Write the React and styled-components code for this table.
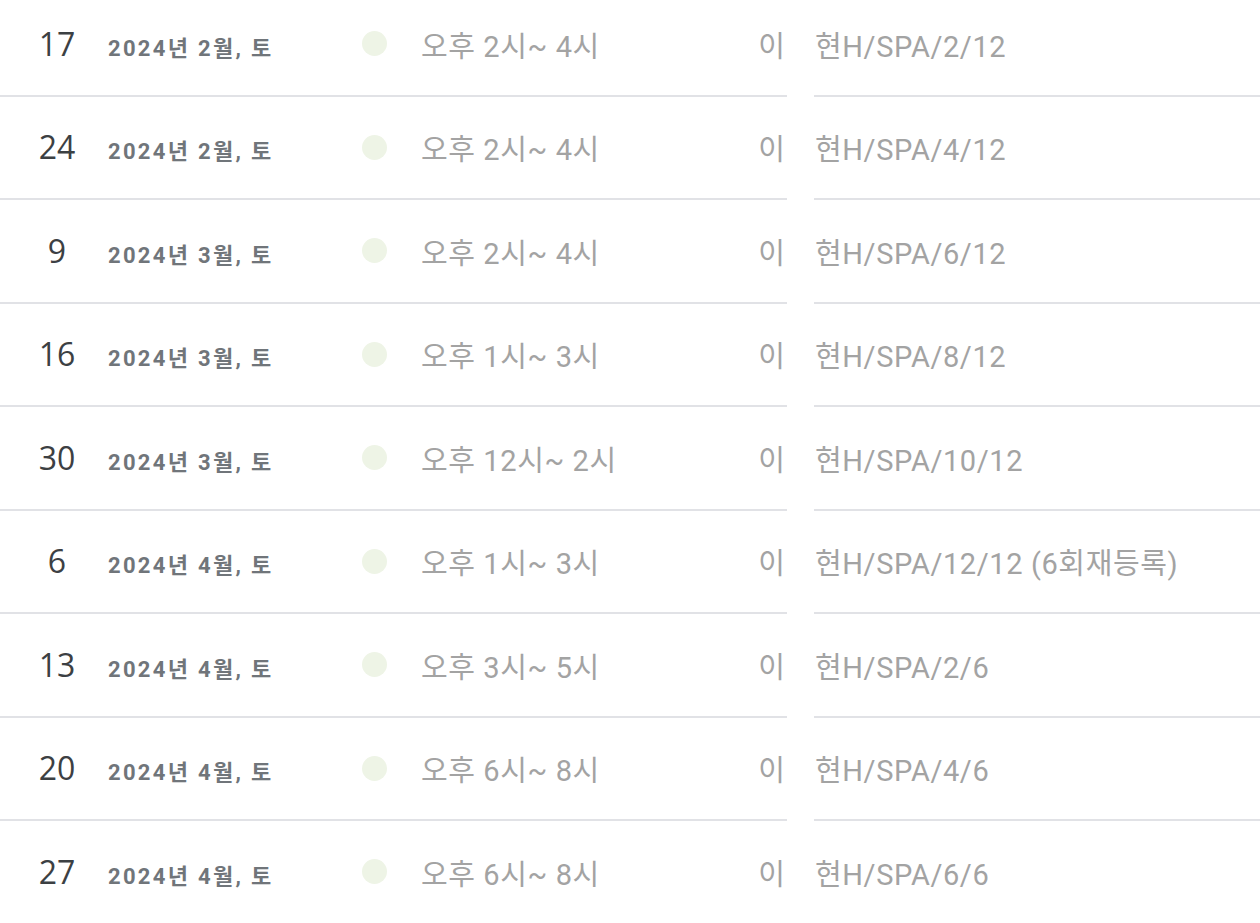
import React from "react";
import styled, { createGlobalStyle } from "styled-components";

const Global = createGlobalStyle`
  html, body { margin: 0; padding: 0; background: #ffffff; overflow: hidden; }
  body { font-family: Roboto, "Noto Sans CJK KR", sans-serif; }
`;

const List = styled.div`
  margin-top: -7px;
  display: flex;
  flex-direction: column;
`;

const Row = styled.div`
  display: flex;
  height: 103.5px;
`;

const Main = styled.div`
  flex: 0 0 787px;
  display: flex;
  align-items: center;
  box-sizing: border-box;
  border-bottom: 2px solid ${(p) => (p.$last ? "transparent" : "#e1e2e6")};
`;

const Side = styled.div`
  flex: 1;
  margin-left: 27px;
  display: flex;
  align-items: center;
  box-sizing: border-box;
  border-bottom: 2px solid ${(p) => (p.$last ? "transparent" : "#e1e2e6")};
`;

const DayNum = styled.div`
  width: 60px;
  margin-left: 27px;
  text-align: center;
  font-family: "Open Sans", Roboto, sans-serif;
  font-size: 32px;
  color: #3c4043;
  line-height: 1;
`;

const DateLabel = styled.div`
  width: 254px;
  margin-left: 21px;
  margin-top: 4px;
  font-family: Roboto, "Noto Sans CJK KR", sans-serif;
  font-weight: 700;
  font-size: 22px;
  letter-spacing: 2.3px;
  color: #70757a;
  white-space: nowrap;
`;

const Dot = styled.span`
  width: 25px;
  height: 25px;
  border-radius: 50%;
  background: #eef4e6;
  flex-shrink: 0;
`;

const Light = styled.div`
  font-family: Roboto, "Noto Sans CJK KR", sans-serif;
  font-size: 29px;
  letter-spacing: 0.6px;
  color: #a3a3a3;
  white-space: nowrap;
`;

const Time = styled(Light)`
  margin-left: 34px;
`;

const Who = styled(Light)`
  margin-left: auto;
  padding-right: 2px;
  letter-spacing: 0;
`;

const Title = styled(Light)`
  margin-left: 1px;
`;

const rows = [
  { d: "17", m: "2024년 2월, 토", t: "오후 2시~ 4시", s: "현H/SPA/2/12" },
  { d: "24", m: "2024년 2월, 토", t: "오후 2시~ 4시", s: "현H/SPA/4/12" },
  { d: "9", m: "2024년 3월, 토", t: "오후 2시~ 4시", s: "현H/SPA/6/12" },
  { d: "16", m: "2024년 3월, 토", t: "오후 1시~ 3시", s: "현H/SPA/8/12" },
  { d: "30", m: "2024년 3월, 토", t: "오후 12시~ 2시", s: "현H/SPA/10/12" },
  { d: "6", m: "2024년 4월, 토", t: "오후 1시~ 3시", s: "현H/SPA/12/12 (6회재등록)" },
  { d: "13", m: "2024년 4월, 토", t: "오후 3시~ 5시", s: "현H/SPA/2/6" },
  { d: "20", m: "2024년 4월, 토", t: "오후 6시~ 8시", s: "현H/SPA/4/6" },
  { d: "27", m: "2024년 4월, 토", t: "오후 6시~ 8시", s: "현H/SPA/6/6" },
];

export default function App() {
  return (
    <>
      <Global />
      <List>
        {rows.map((r, i) => {
          const last = i === rows.length - 1;
          return (
            <Row key={i}>
              <Main $last={last}>
                <DayNum>{r.d}</DayNum>
                <DateLabel>{r.m}</DateLabel>
                <Dot />
                <Time>{r.t}</Time>
                <Who>이</Who>
              </Main>
              <Side $last={last}>
                <Title>{r.s}</Title>
              </Side>
            </Row>
          );
        })}
      </List>
    </>
  );
}
